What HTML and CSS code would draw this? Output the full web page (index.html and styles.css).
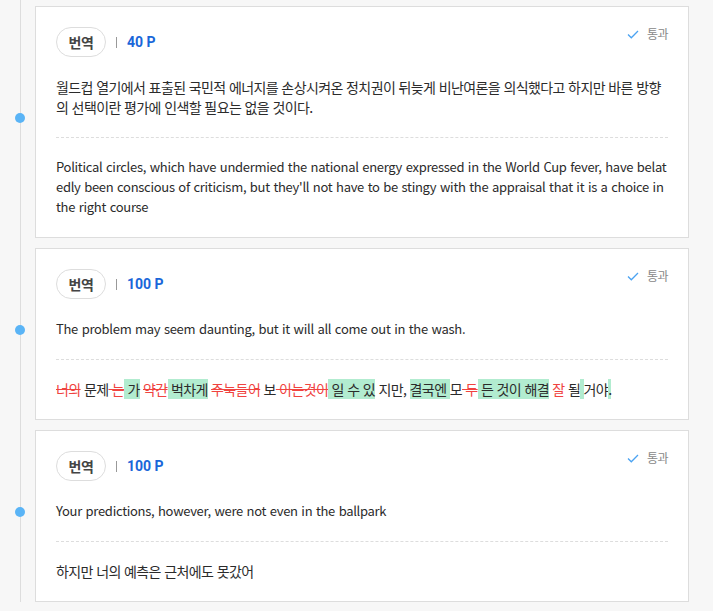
FILE: index.html
```html
<!DOCTYPE html>
<html lang="ko">
<head>
    <meta charset="utf-8">
    <title> 번역 기록 </title>

    <!-- Styling -->
    <link rel="stylesheet" href="styles.css">
</head>
<body>
    <ul class="timeline">

        <!-- 40 P : korean -> english -->
        <li class="entry">
            <span class="dot"></span>
            <div class="card">
                <div class="card_head">
                    <span class="badge">번역</span>
                    <span class="bar"></span>
                    <span class="point">40 P</span>
                    <span class="status">
                        <svg class="check" width="12" height="9" viewBox="0 0 12 9"><path d="M1 4.5 L4.3 7.8 L11 1" fill="none" stroke="#4ba3f2" stroke-width="1.3"/></svg>
                        통과
                    </span>
                </div>
                <p class="question">월드컵 열기에서 표출된 국민적 에너지를 손상시켜온 정치권이 뒤늦게 비난여론을 의식했다고 하지만 바른 방향의 선택이란 평가에 인색할 필요는 없을 것이다.</p>
                <p class="answer" lang="en">Political circles, which have undermied the national energy expressed in the World Cup fever, have belatedly been conscious of criticism, but they'll not have to be stingy with the appraisal that it is a choice in the right course</p>
            </div>
        </li>

        <!-- 100 P : english -> korean, with corrections -->
        <li class="entry">
            <span class="dot"></span>
            <div class="card">
                <div class="card_head">
                    <span class="badge">번역</span>
                    <span class="bar"></span>
                    <span class="point">100 P</span>
                    <span class="status">
                        <svg class="check" width="12" height="9" viewBox="0 0 12 9"><path d="M1 4.5 L4.3 7.8 L11 1" fill="none" stroke="#4ba3f2" stroke-width="1.3"/></svg>
                        통과
                    </span>
                </div>
                <p class="question" lang="en">The problem may seem daunting, but it will all come out in the wash.</p>
                <p class="answer diff"><del>너의</del> 문제<del> 는</del><ins> 가</ins> <del>약간</del><ins> 벅차게</ins> <del>주눅들어</del> 보<del> 이는것이</del><ins> 일 수 있</ins> 지만, <ins>결국엔 </ins>모<del> 두</del><ins> 든 것이 해결</ins> <em>잘</em> 될<ins> </ins>거야<ins>.</ins></p>
            </div>
        </li>

        <li class="entry">
            <span class="dot"></span>
            <div class="card">
                <div class="card_head">
                    <span class="badge">번역</span>
                    <span class="bar"></span>
                    <span class="point">100 P</span>
                    <span class="status">
                        <svg class="check" width="12" height="9" viewBox="0 0 12 9"><path d="M1 4.5 L4.3 7.8 L11 1" fill="none" stroke="#4ba3f2" stroke-width="1.3"/></svg>
                        통과
                    </span>
                </div>
                <p class="question" lang="en">Your predictions, however, were not even in the ballpark</p>
                <p class="answer">하지만 너의 예측은 근처에도 못갔어</p>
            </div>
        </li>

    </ul>
</body>
</html>
```

FILE: styles.css
```css
* {
    box-sizing: border-box;
}

:root {
    --paper:     #ffffff;
    --page:      #f7f7f7;
    --ink:       #2b2b2b;
    --line:      #dddddd;
    --grey:      #888888;
    --blue:      #1a66d9;
    --sky:       #5ab4f6;
    --red:       #f0433f;
    --mint:      #b2ecd0;
}

body {
    margin: 0;

    color: var( --ink );
    background-color: var( --page );
    font-family: "Noto Sans CJK KR", "Noto Sans", sans-serif;
    font-size: 14px;
}

.timeline {
    position: relative;
    margin: 0;
    padding: 6px 24px 0 35px;
    list-style: none;
}

.timeline::before {
    content: "";
    position: absolute;
    left: 20px;
    top: 0;
    bottom: 0;
    width: 1px;
    background-color: var( --line );
}

.entry {
    position: relative;
    margin-bottom: 10px;
}

.dot {
    position: absolute;
    left: -20px;
    top: calc( 50% - 9px );

    width: 10px;
    height: 10px;

    border-radius: 50%;
    background-color: var( --sky );
}

.card {
    padding: 20px;

    background-color: var( --paper );
    border: 1px solid var( --line );
}

.card_head {
    display: flex;
    align-items: center;
    height: 30px;
}

.badge {
    display: flex;
    align-items: center;
    justify-content: center;

    width: 50px;
    height: 30px;

    font-size: 14px;
    font-weight: bold;
    letter-spacing: -0.5px;
    color: #444;

    border: 1px solid var( --line );
    border-radius: 15px;
}

.bar {
    width: 1px;
    height: 11px;
    margin: 0 10px;
    background-color: #999;
}

.point {
    font-family: Roboto, "Noto Sans", sans-serif;
    font-size: 14px;
    font-weight: bold;
    color: var( --blue );
}

.status {
    display: flex;
    align-items: center;
    align-self: flex-start;
    gap: 8px;

    margin-left: auto;
    line-height: 14px;

    font-size: 12px;
    letter-spacing: -0.5px;
    color: var( --grey );
}

.question, .answer {
    margin: 0;
    line-height: 20px;
    letter-spacing: -0.6px;
    word-break: break-all;
}

.question:lang(en), .answer:lang(en) {
    font-size: 13px;
    letter-spacing: -0.29px;
    word-spacing: 1px;
}

.question {
    margin-top: 20px;
    padding-bottom: 20px;
    border-bottom: 1px dashed var( --line );
}

.answer {
    padding-top: 19px;
}

del {
    color: var( --red );
    text-decoration-color: var( --red );
}

ins {
    text-decoration: none;
    background-color: var( --mint );
}

em {
    font-style: normal;
    color: var( --red );
}
```
